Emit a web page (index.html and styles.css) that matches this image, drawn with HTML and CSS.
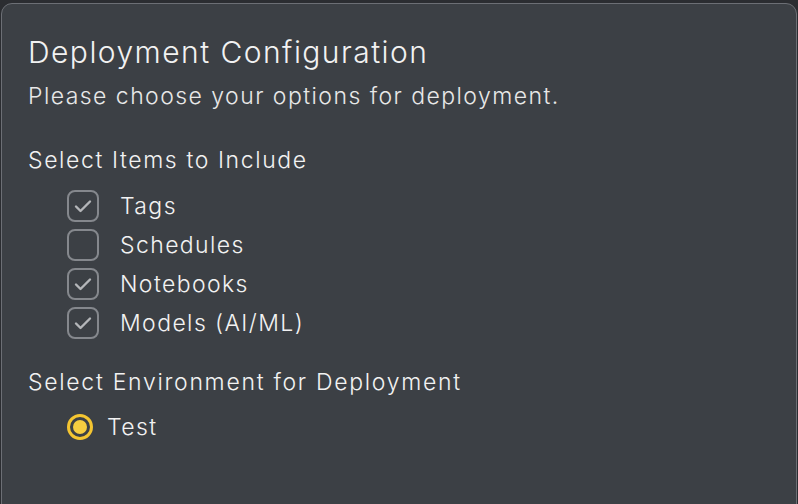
FILE: index.html
```html
<!DOCTYPE html>
<html lang="en">
<head>
    <meta charset="UTF-8">
    <meta name="viewport" content="width=device-width, initial-scale=1.0">
    <title>Deployment Configuration</title>
    <link rel="stylesheet" href="styles.css">
</head>
<body>

    <div class="dialog">
        <h1 class="title">Deployment Configuration</h1>
        <p class="subtitle">Please choose your options for deployment.</p>

        <h2 class="section">Select Items to Include</h2>
        <div class="options">
            <label class="option">
                <span class="box checked">
                    <svg viewBox="0 0 32 32"><path d="M9 16.5l4.5 4.5 9.5-9.5"/></svg>
                </span>
                <span class="label">Tags</span>
            </label>
            <label class="option">
                <span class="box"></span>
                <span class="label">Schedules</span>
            </label>
            <label class="option">
                <span class="box checked">
                    <svg viewBox="0 0 32 32"><path d="M9 16.5l4.5 4.5 9.5-9.5"/></svg>
                </span>
                <span class="label">Notebooks</span>
            </label>
            <label class="option">
                <span class="box checked">
                    <svg viewBox="0 0 32 32"><path d="M9 16.5l4.5 4.5 9.5-9.5"/></svg>
                </span>
                <span class="label">Models (AI/ML)</span>
            </label>
        </div>

        <h2 class="section env">Select Environment for Deployment</h2>
        <div class="options radios">
            <label class="option">
                <span class="radio"></span>
                <span class="label">Test</span>
            </label>
        </div>
    </div>

</body>
</html>
```

FILE: styles.css
```css
body {
    margin: 0;
    background-color: #2b2d31;
    font-family: Inter, "Noto Sans", sans-serif;
    font-weight: 300;
    color: #f2f2f2;
    overflow: hidden;
}
.dialog {
    margin: 3px 0 0 1px;
    width: 796px;
    height: 560px;
    box-sizing: border-box;
    background-color: #3c4045;
    border: 1px solid #6c6f75;
    border-radius: 11px;
    padding: 30px 0 0 26px;
}
.title {
    margin: 0;
    font-size: 30px;
    font-weight: 300;
    line-height: 36px;
    letter-spacing: 1.45px;
}
.subtitle {
    margin: 11px 0 0;
    font-size: 23px;
    line-height: 30px;
    letter-spacing: 1.45px;
    color: #e8e8e8;
}
.section {
    margin: 34px 0 0;
    font-size: 23px;
    font-weight: 300;
    line-height: 30px;
    letter-spacing: 1.6px;
}
.section.env {
    margin-top: 25px;
    letter-spacing: 1.7px;
}
.options {
    margin-top: 11px;
    padding-left: 39px;
}
.radios {
    margin-top: 10px;
}
.option {
    display: flex;
    align-items: center;
    height: 39px;
    font-size: 23px;
    letter-spacing: 1.4px;
    cursor: pointer;
}
.box {
    width: 32px;
    height: 32px;
    box-sizing: border-box;
    border: 2px solid #85888d;
    border-radius: 8px;
    margin-right: 21px;
    display: flex;
    align-items: center;
    justify-content: center;
}
.box svg {
    width: 32px;
    height: 32px;
    flex: none;
}
.box path {
    fill: none;
    stroke: #b4b6b9;
    stroke-width: 2.4;
    stroke-linecap: round;
    stroke-linejoin: round;
}
.radio {
    width: 26px;
    height: 26px;
    box-sizing: border-box;
    border: 3px solid #f4c531;
    border-radius: 50%;
    margin-right: 14px;
    display: flex;
    align-items: center;
    justify-content: center;
}
.radio::after {
    content: "";
    width: 14px;
    height: 14px;
    border-radius: 50%;
    background-color: #f6cd40;
}
```
